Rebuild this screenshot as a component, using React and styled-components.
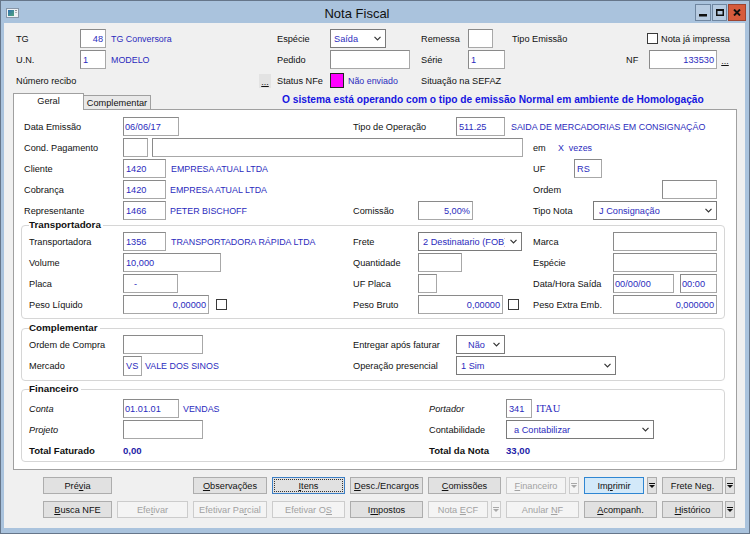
import React from 'react';
import styled, { createGlobalStyle, css } from 'styled-components';

const Global = createGlobalStyle`
  html, body { margin: 0; padding: 0; background: #fff; }
  body {
    width: 750px; height: 534px; overflow: hidden;
    font-family: "Liberation Sans", Arial, sans-serif;
    font-size: 9.2px; color: #111;
  }
  * { box-sizing: border-box; }
`;

const BLUE = '#2b2bbd';

const Win = styled.div`
  width: 750px; height: 534px;
  background: #aac3dd;
  border: 1px solid #66768a;
  display: flex; flex-direction: column;
`;

const TitleBar = styled.div`
  flex: 0 0 22px; height: 22px;
  display: flex; align-items: flex-start;
  padding: 0 3px 0 5px;
`;

const AppIcon = styled.svg`
  margin-top: 7px; flex: 0 0 13px;
`;

const Title = styled.div`
  flex: 1; text-align: center;
  font-size: 13px; line-height: 22px; padding-top: 2px;
  color: #111;
`;

const Controls = styled.div`
  display: flex; gap: 1px; margin-top: 3px;
`;

const CtlBtn = styled.div`
  width: ${p => p.$w}px; height: 17px;
  display: flex; align-items: center; justify-content: center;
  border: 1px solid ${p => (p.$close ? '#9e4330' : '#6f86a0')};
  background: ${p => (p.$close ? '#d65b3c' : '#b7cbe1')};
`;

const Body = styled.div`
  flex: 1;
  margin: 0 4px 5px 3px;
  background: #f0f0f0;
  display: flex; flex-direction: column;
`;

const Top = styled.div`
  padding: 5px 0 0 12px;
  display: flex; flex-direction: column;
`;

const Row = styled.div`
  display: flex; align-items: center;
  height: 21px; flex: 0 0 21px;
  padding-left: ${p => p.$pl || 0}px;
  white-space: nowrap;
`;

const Col = styled.div`
  display: flex; align-items: center;
  ${p => (p.$w ? css`flex: 0 0 ${p.$w}px; width: ${p.$w}px;` : css`flex: 1;`)}
`;

const Lbl = styled.div`
  flex: 0 0 ${p => p.$w}px; width: ${p => p.$w}px;
  margin-left: ${p => p.$ml || 0}px;
  font-style: ${p => (p.$italic ? 'italic' : 'normal')};
  font-weight: ${p => (p.$bold ? 'bold' : 'normal')};
  font-size: ${p => (p.$bold ? '9.6px' : '9.2px')};
  color: #111;
  overflow: visible;
`;

const Box = styled.div`
  flex: 0 0 ${p => p.$w}px; width: ${p => p.$w}px;
  height: ${p => p.$h || 19}px;
  margin-left: ${p => p.$ml || 0}px;
  background: #fff;
  border: 1px solid #a8a8a8;
  border-top-color: #8a8a8a; border-left-color: #8a8a8a;
  color: ${BLUE};
  display: flex; align-items: center;
  justify-content: ${p => (p.$align === 'right' ? 'flex-end' : 'flex-start')};
  padding: 0 ${p => (p.$pr ?? 2)}px 0 ${p => (p.$pl ?? 2)}px;
  white-space: nowrap; overflow: hidden;
`;

const SelBox = styled(Box)`
  border-color: #7a7a7a;
  padding-right: 4px;
`;

const SelText = styled.span`
  flex: 1; overflow: hidden; white-space: nowrap;
  ${p => p.$tw && css`flex: 0 0 ${p.$tw}px; width: ${p.$tw}px; margin-right: auto;`}
`;

const Chevron = () => (
  <svg width="7" height="5" viewBox="0 0 7 5" style={{ flex: '0 0 7px' }}>
    <polyline points="0.5,0.8 3.5,3.8 6.5,0.8" fill="none" stroke="#333" strokeWidth="1.2" />
  </svg>
);

const Select = ({ w, ml, pl, tw, children }) => (
  <SelBox $w={w} $ml={ml} $pl={pl}>
    <SelText $tw={tw}>{children}</SelText>
    <Chevron />
  </SelBox>
);

const Val = styled.span`
  margin-left: ${p => p.$ml || 0}px;
  color: ${BLUE};
  font-family: ${p => (p.$serif ? '"Liberation Serif", "Times New Roman", serif' : 'inherit')};
  font-size: ${p => (p.$serif ? '10.5px' : '8.9px')};
  white-space: nowrap;
`;

const Total = styled.span`
  font-weight: bold; font-size: 9.6px; color: #1d1da8;
`;

const Check = styled.div`
  flex: 0 0 ${p => p.$s || 11}px; width: ${p => p.$s || 11}px; height: ${p => p.$s || 11}px;
  margin-left: ${p => p.$ml || 0}px;
  border: 1px solid #3a3a3a; background: #fff;
`;

const Dots = styled.div`
  flex: 0 0 12px; width: 12px; height: 14px;
  margin-left: ${p => p.$ml || 0}px;
  background: ${p => (p.$bg ? '#e3e3e3' : 'transparent')};
  display: flex; align-items: flex-end; justify-content: center;
  font-size: 9px; line-height: 11px; text-decoration: underline;
`;

const Status = styled.div`
  flex: 0 0 14px; width: 14px; height: 15px;
  background: #ff00ff; border: 1px solid #222;
`;

const TabStrip = styled.div`
  display: flex; align-items: flex-end;
  height: 16px; margin: 2px 8px 0 9px;
  position: relative; z-index: 1;
`;

const Tab = styled.div`
  display: flex; align-items: center; justify-content: center;
  ${p => (p.$active
    ? css`width: 71px; height: 17px; margin-bottom: -1px; background: #fff;
          border: 1px solid #a0a0a0; border-bottom: none; padding-bottom: 3px;`
    : css`width: 67px; height: 14px; background: #e9e9e9;
          border: 1px solid #a0a0a0; border-left: none; border-bottom: none; padding-top: 1px;`)}
`;

const Banner = styled.div`
  align-self: flex-start;
  margin-left: 131px; line-height: 13px;
  font-weight: bold; font-size: 10.2px; color: #1616e0;
  white-space: nowrap;
`;

const Panel = styled.div`
  height: 361px; margin: 0 8px 0 9px;
  background: #fff; border: 1px solid #a0a0a0;
  padding: 6px 11px 0 7px;
  display: flex; flex-direction: column;
`;

const Group = styled.fieldset`
  margin: ${p => p.$mt || 0}px 0 0 0;
  padding: ${p => p.$pt || 0}px 0 ${p => p.$pb || 0}px 7px;
  border: 1px solid #d6d6d6; border-radius: 4px;
  min-width: 0;
`;

const Legend = styled.legend`
  padding: 0 2px 0 0; margin-left: 0;
  font-weight: bold; font-size: 9.8px; line-height: 12px; color: #111;
`;

const BtnGrid = styled.div`
  display: grid;
  grid-template-columns: 69px 71px 74px 73px 73px 73px 73px 73px 73px;
  grid-auto-rows: 17px;
  column-gap: 5px; row-gap: 7px;
  margin: 7px 0 0 39px;
`;

const BtnFace = styled.div`
  height: 17px; flex: 1;
  display: flex; align-items: center; justify-content: center;
  font-size: 9.2px; white-space: nowrap;
  border: 1px solid #adadad; background: #e1e1e1; color: #111;
  ${p => p.$focus && css`
    border-color: #3d7fc4;
    outline: 1px dotted #333; outline-offset: -3px;
  `}
  ${p => p.$hover && css`
    border-color: #2f86d2; background: #d3e9f9;
  `}
  ${p => p.$dis && css`
    border-color: #cccccc; background: #f4f4f4; color: #a2a2a2;
  `}
`;

const Btn = ({ children, ...rest }) => (
  <BtnFace {...rest}><span>{children}</span></BtnFace>
);

const ArrowBtn = styled(BtnFace)`
  flex: 0 0 10px; width: 10px;
`;

const Split = styled.div`
  display: flex; gap: ${p => (p.$tight ? 2 : 3)}px;
`;

const Arrow = ({ dis }) => (
  <ArrowBtn $dis={dis}>
    <svg width="6" height="5" viewBox="0 0 6 5">
      <rect x="0" y="0" width="6" height="1" fill={dis ? '#a8a8a8' : '#111'} />
      <polygon points="0,2 6,2 3,5" fill={dis ? '#a8a8a8' : '#111'} />
    </svg>
  </ArrowBtn>
);

const Empty = styled.div``;

export default function App() {
  return (
    <>
      <Global />
      <Win>
        <TitleBar>
          <AppIcon width="13" height="10" viewBox="0 0 13 10">
            <defs>
              <linearGradient id="ig" x1="0" y1="0" x2="1" y2="1">
                <stop offset="0" stopColor="#2f6fb3" />
                <stop offset="1" stopColor="#4fa57a" />
              </linearGradient>
            </defs>
            <rect x="0.5" y="0.5" width="12" height="9" fill="#eef2f6" stroke="#8796a8" />
            <rect x="2" y="2" width="6" height="6" fill="url(#ig)" />
            <rect x="9.5" y="2" width="1" height="1" fill="#333" />
            <rect x="9.5" y="4" width="1" height="1" fill="#777" />
          </AppIcon>
          <Title>Nota Fiscal</Title>
          <Controls>
            <CtlBtn $w={16}>
              <svg width="8" height="8" viewBox="0 0 8 8"><rect x="0" y="5" width="8" height="2.5" fill="#111" /></svg>
            </CtlBtn>
            <CtlBtn $w={15}>
              <svg width="8" height="7" viewBox="0 0 8 7">
                <rect x="0.75" y="1" width="6.5" height="5.25" fill="none" stroke="#111" strokeWidth="1.5" />
                <rect x="0" y="0" width="8" height="2" fill="#111" />
              </svg>
            </CtlBtn>
            <CtlBtn $w={18} $close>
              <svg width="8" height="7" viewBox="0 0 8 7">
                <path d="M1 0.5 L7 6.5 M7 0.5 L1 6.5" stroke="#111" strokeWidth="1.9" />
              </svg>
            </CtlBtn>
          </Controls>
        </TitleBar>

        <Body>
          <Top>
            <Row>
              <Col $w={261}><Lbl $w={64}>TG</Lbl><Box $w={26} $align="right">48</Box><Val $ml={5}>TG Conversora</Val></Col>
              <Col $w={144}><Lbl $w={53}>Espécie</Lbl><Select w={56} pl={3}>Saída</Select></Col>
              <Col $w={91}><Lbl $w={47}>Remessa</Lbl><Box $w={25} /></Col>
              <Col><Lbl $w={135}>Tipo Emissão</Lbl><Check $s={11} /><Lbl $w={80} $ml={3}>Nota já impressa</Lbl></Col>
            </Row>
            <Row>
              <Col $w={261}><Lbl $w={64}>U.N.</Lbl><Box $w={26}>1</Box><Val $ml={5}>MODELO</Val></Col>
              <Col $w={144}><Lbl $w={53}>Pedido</Lbl><Box $w={80} /></Col>
              <Col $w={91}><Lbl $w={47}>Série</Lbl><Box $w={37}>1</Box></Col>
              <Col><Lbl $w={23} $ml={114}>NF</Lbl><Box $w={68} $align="right">133530</Box><Dots $ml={2}>...</Dots></Col>
            </Row>
            <Row>
              <Col $w={261}><Lbl $w={243}>Número recibo</Lbl><Dots $bg>...</Dots></Col>
              <Col $w={144}><Lbl $w={53}>Status NFe</Lbl><Status /><Val $ml={4}>Não enviado</Val></Col>
              <Col><Lbl $w={120}>Situação na SEFAZ</Lbl></Col>
            </Row>
          </Top>

          <TabStrip>
            <Tab $active>Geral</Tab>
            <Tab>Complementar</Tab>
            <Banner>O sistema está operando com o tipo de emissão Normal em ambiente de Homologação</Banner>
          </TabStrip>

          <Panel>
            <Row $pl={3}>
              <Col $w={329}><Lbl $w={99}>Data Emissão</Lbl><Box $w={56} $pl={1}>06/06/17</Box></Col>
              <Col><Lbl $w={103}>Tipo de Operação</Lbl><Box $w={49}>511.25</Box><Val $ml={6}>SAIDA DE MERCADORIAS EM CONSIGNAÇÃO</Val></Col>
            </Row>
            <Row $pl={3}>
              <Col><Lbl $w={99}>Cond. Pagamento</Lbl><Box $w={25} /><Box $w={371} $ml={4} /><Lbl $w={13} $ml={10}>em</Lbl><Val $ml={12}>X&nbsp;&nbsp;vezes</Val></Col>
            </Row>
            <Row $pl={3}>
              <Col $w={329}><Lbl $w={99}>Cliente</Lbl><Box $w={43}>1420</Box><Val $ml={5}>EMPRESA ATUAL LTDA</Val></Col>
              <Col $w={180} />
              <Col><Lbl $w={41}>UF</Lbl><Box $w={28}>RS</Box></Col>
            </Row>
            <Row $pl={3}>
              <Col $w={329}><Lbl $w={99}>Cobrança</Lbl><Box $w={43}>1420</Box><Val $ml={4}>EMPRESA ATUAL LTDA</Val></Col>
              <Col $w={180} />
              <Col $w={184}><Lbl $w={40}>Ordem</Lbl><Box $w={55} $ml={89} /></Col>
            </Row>
            <Row $pl={3}>
              <Col $w={329}><Lbl $w={99}>Representante</Lbl><Box $w={43}>1466</Box><Val $ml={4}>PETER BISCHOFF</Val></Col>
              <Col $w={180}><Lbl $w={65}>Comissão</Lbl><Box $w={55} $align="right">5,00%</Box></Col>
              <Col><Lbl $w={60}>Tipo Nota</Lbl><Select w={124} pl={5}>J Consignação</Select></Col>
            </Row>

            <Group $mt={-2} $pb={3}>
              <Legend>Transportadora</Legend>
              <Row>
                <Col $w={324}><Lbl $w={94}>Transportadora</Lbl><Box $w={43}>1356</Box><Val $ml={5}>TRANSPORTADORA RÁPIDA LTDA</Val></Col>
                <Col $w={180}><Lbl $w={65}>Frete</Lbl><Select w={104} pl={4} tw={82}>2 Destinatario (FOB)</Select></Col>
                <Col><Lbl $w={80}>Marca</Lbl><Box $w={104} /></Col>
              </Row>
              <Row>
                <Col $w={324}><Lbl $w={94}>Volume</Lbl><Box $w={98}>10,000</Box></Col>
                <Col $w={180}><Lbl $w={65}>Quantidade</Lbl><Box $w={44} /></Col>
                <Col><Lbl $w={80}>Espécie</Lbl><Box $w={104} /></Col>
              </Row>
              <Row>
                <Col $w={324}><Lbl $w={94}>Placa</Lbl><Box $w={55} $pl={10}>-</Box></Col>
                <Col $w={180}><Lbl $w={65}>UF Placa</Lbl><Box $w={19} /></Col>
                <Col><Lbl $w={80}>Data/Hora Saída</Lbl><Box $w={61} $pl={1}>00/00/00</Box><Box $w={37} $ml={6} $pl={1}>00:00</Box></Col>
              </Row>
              <Row>
                <Col $w={324}><Lbl $w={94}>Peso Líquido</Lbl><Box $w={86} $align="right">0,00000</Box><Check $ml={7} /></Col>
                <Col $w={180}><Lbl $w={65}>Peso Bruto</Lbl><Box $w={85} $align="right">0,00000</Box><Check $ml={5} /></Col>
                <Col><Lbl $w={80}>Peso Extra Emb.</Lbl><Box $w={104} $align="right">0,000000</Box></Col>
              </Row>
            </Group>

            <Group $mt={3} $pb={4}>
              <Legend>Complementar</Legend>
              <Row>
                <Col $w={324}><Lbl $w={94}>Ordem de Compra</Lbl><Box $w={80} /></Col>
                <Col><Lbl $w={103}>Entregar após faturar</Lbl><Select w={49} pl={11}>Não</Select></Col>
              </Row>
              <Row>
                <Col $w={324}><Lbl $w={94}>Mercado</Lbl><Box $w={19} $h={20}>VS</Box><Val $ml={3}>VALE DOS SINOS</Val></Col>
                <Col><Lbl $w={103}>Operação presencial</Lbl><Select w={160} pl={4}>1 Sim</Select></Col>
              </Row>
            </Group>

            <Group $mt={2} $pt={3}>
              <Legend>Financeiro</Legend>
              <Row>
                <Col $w={400}><Lbl $w={94} $italic>Conta</Lbl><Box $w={56} $pl={1}>01.01.01</Box><Val $ml={4}>VENDAS</Val></Col>
                <Col><Lbl $w={77} $italic>Portador</Lbl><Box $w={26}>341</Box><Val $ml={4} $serif>ITAU</Val></Col>
              </Row>
              <Row>
                <Col $w={400}><Lbl $w={94} $italic>Projeto</Lbl><Box $w={80} /></Col>
                <Col><Lbl $w={77}>Contabilidade</Lbl><Select w={148} pl={7}>a Contabilizar</Select></Col>
              </Row>
              <Row>
                <Col $w={400}><Lbl $w={94} $bold>Total Faturado</Lbl><Total>0,00</Total></Col>
                <Col><Lbl $w={77} $bold>Total da Nota</Lbl><Total>33,00</Total></Col>
              </Row>
            </Group>
          </Panel>

          <BtnGrid>
            <Btn>Pré<u>v</u>ia</Btn>
            <Empty />
            <Btn><u>O</u>bservações</Btn>
            <Btn $focus><u>I</u>tens</Btn>
            <Btn><u>D</u>esc./Encargos</Btn>
            <Btn><u>C</u>omissões</Btn>
            <Split><Btn $dis><u>F</u>inanceiro</Btn><Arrow dis /></Split>
            <Split><Btn $hover>Im<u>p</u>rimir</Btn><Arrow /></Split>
            <Split $tight><Btn>Frete Neg.</Btn><Arrow /></Split>

            <Btn><u>B</u>usca NFE</Btn>
            <Btn $dis>Efe<u>t</u>ivar</Btn>
            <Btn $dis>Efetivar Pa<u>r</u>cial</Btn>
            <Btn $dis>Efetivar O<u>S</u></Btn>
            <Btn>I<u>m</u>postos</Btn>
            <Split><Btn $dis>Nota <u>E</u>CF</Btn><Arrow dis /></Split>
            <Btn $dis>Anular <u>N</u>F</Btn>
            <Btn><u>A</u>companh.</Btn>
            <Split $tight><Btn><u>H</u>istórico</Btn><Arrow /></Split>
          </BtnGrid>
        </Body>
      </Win>
    </>
  );
}
